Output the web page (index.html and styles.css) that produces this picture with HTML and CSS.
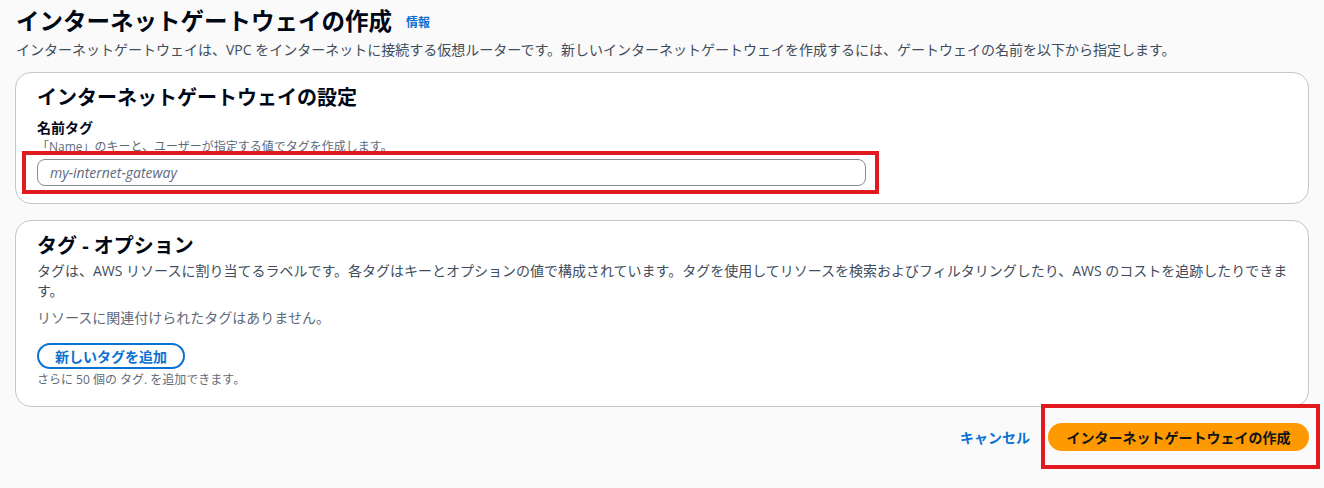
FILE: index.html
```html
<!DOCTYPE html>
<html lang="ja">
<head>
    <meta charset="UTF-8">
    <meta name="viewport" content="width=device-width, initial-scale=1.0">
    <title>インターネットゲートウェイの作成</title>
    <link rel="stylesheet" href="styles.css">
</head>
<body>
    <div class="page-header">
        <h1>インターネットゲートウェイの作成<a href="#" class="info-link">情報</a></h1>
        <p class="page-desc">インターネットゲートウェイは、VPC をインターネットに接続する仮想ルーターです。新しいインターネットゲートウェイを作成するには、ゲートウェイの名前を以下から指定します。</p>
    </div>

    <section class="card card-settings">
        <h2>インターネットゲートウェイの設定</h2>
        <label for="name-tag" class="field-label">名前タグ</label>
        <p class="field-desc">「Name」のキーと、ユーザーが指定する値でタグを作成します。</p>
        <div class="input-wrap highlight">
            <input type="text" id="name-tag" placeholder="my-internet-gateway">
        </div>
    </section>

    <section class="card card-tags">
        <h2>タグ - オプション</h2>
        <p class="card-desc">タグは、AWS リソースに割り当てるラベルです。各タグはキーとオプションの値で構成されています。タグを使用してリソースを検索およびフィルタリングしたり、AWS のコストを追跡したりできます。</p>
        <p class="empty-text">リソースに関連付けられたタグはありません。</p>
        <button class="btn-normal">新しいタグを追加</button>
        <p class="field-desc hint">さらに 50 個の タグ. を追加できます。</p>
    </section>

    <div class="actions">
        <a href="#" class="btn-link">キャンセル</a>
        <div class="primary-wrap highlight-2">
            <button class="btn-primary">インターネットゲートウェイの作成</button>
        </div>
    </div>
</body>
</html>
```

FILE: styles.css
```css
html {
    min-height: 100%;
    background-color: #fafafa;
}

body {
    font-family: "Open Sans", "Noto Sans CJK JP", sans-serif;
    background-color: #fafafa;
    color: #000716;
    margin: 0;
    padding: 7px 15px 40px 15px;
}

h1 {
    font-size: 23.5px;
    font-weight: 700;
    line-height: 28px;
    margin: 0;
    padding-left: 1px;
}

.info-link {
    font-size: 12px;
    font-weight: 700;
    color: #0972d3;
    text-decoration: none;
    margin-left: 14px;
    vertical-align: 3px;
}

.page-desc {
    font-size: 14px;
    line-height: 20px;
    color: #414d5c;
    margin: 3px 0 12px 1px;
}

.card {
    background-color: #fff;
    border: 1px solid #c6c6cd;
    border-radius: 16px;
    padding: 13px 20px 16px 21px;
    margin-bottom: 16px;
}

.card-settings {
    padding-bottom: 17px;
}

.card-tags {
    padding-bottom: 18px;
}

.card h2 {
    font-size: 20px;
    font-weight: 700;
    line-height: 24px;
    margin: 0;
}

.field-label {
    display: block;
    font-size: 14px;
    font-weight: 700;
    line-height: 18px;
    margin-top: 9px;
}

.field-desc {
    font-size: 12px;
    line-height: 16px;
    color: #5f6b7a;
    margin: 2px 0 0 0;
}

.input-wrap {
    margin-top: 4px;
    width: 829px;
}

.input-wrap input {
    display: block;
    box-sizing: border-box;
    width: 100%;
    height: 27px;
    border: 1px solid #8c8c94;
    border-radius: 8px;
    padding: 0 12px;
    font-family: inherit;
    font-size: 14px;
    background: #fff;
}

.input-wrap input::placeholder {
    color: #5f6b7a;
    font-style: italic;
}

.highlight,
.highlight-2 {
    position: relative;
}

.highlight::after {
    content: "";
    position: absolute;
    top: -8px;
    bottom: -8px;
    left: -15px;
    right: -13px;
    border: 4px solid #e2191f;
    pointer-events: none;
}

.highlight-2::after {
    content: "";
    position: absolute;
    top: -19px;
    bottom: -18px;
    left: -7px;
    right: -11px;
    border: 4px solid #e2191f;
    pointer-events: none;
}

.card-desc {
    font-size: 14px;
    line-height: 20px;
    color: #414d5c;
    margin: 3px 0 0 0;
}

.empty-text {
    font-size: 14px;
    line-height: 20px;
    color: #5f6b7a;
    margin: 7px 0 0 0;
}

.btn-normal {
    display: block;
    margin-top: 15px;
    height: 26px;
    padding: 0 16px;
    border: 2px solid #0972d3;
    border-radius: 20px;
    background: #fff;
    color: #0972d3;
    font-family: inherit;
    font-size: 14px;
    font-weight: 700;
    cursor: pointer;
}

.hint {
    margin-top: 3px;
}

.actions {
    display: flex;
    justify-content: flex-end;
    align-items: center;
    gap: 18px;
}

.btn-link {
    color: #0972d3;
    font-size: 14px;
    font-weight: 700;
    text-decoration: none;
}

.btn-primary {
    display: block;
    height: 28px;
    width: 261px;
    border: none;
    border-radius: 20px;
    background-color: #ff9900;
    color: #0f141a;
    font-family: inherit;
    font-size: 14px;
    font-weight: 700;
    cursor: pointer;
}
```
